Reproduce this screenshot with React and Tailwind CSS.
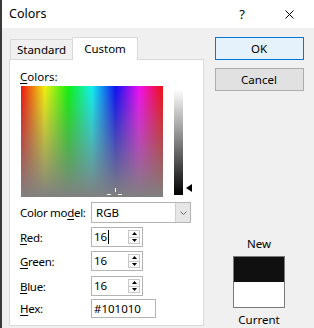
import React from 'react';

const Ul = ({ children }) => (
  <span className="underline decoration-1 underline-offset-[2px]">{children}</span>
);

const Tri = ({ down }) => (
  <svg width="5" height="3" viewBox="0 0 5 3">
    <path d={down ? 'M0 0H5L2.5 3Z' : 'M0 3H5L2.5 0Z'} fill="#000" />
  </svg>
);

const SpinInput = ({ value, caret }) => (
  <div className="flex h-[20px] w-[52px] items-center border border-[#b4b4b4] bg-white">
    <div className="flex flex-1 items-center pl-[2px] leading-[14px] text-black">
      {value}
      {caret && <span className="ml-px inline-block h-[14px] w-px bg-black" />}
    </div>
    <div className="mr-[2px] flex h-[14px] w-[12px] flex-col border border-[#c8c8c8] bg-[#fafafa]">
      <div className="flex flex-1 items-center justify-center border-b border-[#c8c8c8]">
        <Tri />
      </div>
      <div className="flex flex-1 items-center justify-center">
        <Tri down />
      </div>
    </div>
  </div>
);

const Row = ({ label, children, className = '' }) => (
  <div className={`flex items-center ${className}`}>
    <div className="w-[71px] whitespace-nowrap leading-[15px] tracking-[-0.3px] text-black">{label}</div>
    {children}
  </div>
);

export default function App() {
  return (
    <div className="flex h-[328px] w-[314px] flex-col overflow-hidden bg-[#f0f0f0] font-['Noto_Sans',sans-serif] text-[11.5px] text-black">
      {/* title bar */}
      <div className="flex h-[28px] shrink-0 items-center bg-white">
        <div className="h-full w-[2px] bg-[#3a3a3a]" />
        <span className="ml-[7px] text-[12.5px] leading-[16px]">Colors</span>
        <span className="ml-auto mr-[40px] text-[13px] leading-[16px]">?</span>
        <svg width="9" height="9" viewBox="0 0 9 9" className="mr-[20px]">
          <path d="M0.5 0.5L8.5 8.5M8.5 0.5L0.5 8.5" stroke="#000" strokeWidth="1" />
        </svg>
      </div>

      <div className="flex flex-1">
        <div className="w-[2px] bg-[#3a3a3a]" />

        {/* left: tabs + panel */}
        <div className="flex flex-col pl-[7px] pt-[9px]">
          <div className="flex h-[22px] items-end">
            <div className="ml-px flex h-[20px] w-[62px] items-center justify-center border-l border-t border-[#d9d9d9] bg-[#f0f0f0] leading-[15px]">
              Standard
            </div>
            <div className="relative z-10 -mb-px flex h-[23px] w-[66px] items-center justify-center border-l border-r border-t border-[#d9d9d9] bg-white pb-[2px] leading-[15px]">
              Custom
            </div>
          </div>
          <div className="flex h-[267px] w-[195px] flex-col border border-[#d9d9d9] bg-white pl-[10px] pt-[9px]">
            <div className="leading-[15px]">
              <Ul>C</Ul>olors:
            </div>
            <div className="mt-[2px] flex items-start">
              <div className="relative ml-px h-[111px] w-[142px] bg-[linear-gradient(to_right,#f01010,#f0f010_16.7%,#10f010_33.3%,#10f0f0_50%,#1010f0_66.7%,#f010f0_83.3%,#f01010)]">
                <div className="absolute inset-0 bg-[linear-gradient(to_bottom,rgba(128,128,128,0),#808080)]" />
                <div className="absolute left-[94px] top-[102px] h-[4px] w-px bg-white" />
                <div className="absolute left-[86px] top-[108px] h-px w-[4px] bg-white" />
                <div className="absolute left-[97px] top-[108px] h-px w-[4px] bg-white" />
              </div>
              <div className="ml-[11px] mt-[3px] h-[106px] w-[9px] bg-[linear-gradient(to_bottom,#ffffff,#808080_50%,#000000)]" />
              <svg width="6" height="8" viewBox="0 0 6 8" className="ml-[3px] mt-[98px]">
                <path d="M0 4L6 0V8Z" fill="#000" />
              </svg>
            </div>

            <Row label={<>Color mo<Ul>d</Ul>el:</>} className="mt-[5px]">
              <div className="flex h-[21px] w-[100px] items-center border border-[#b4b4b4] bg-white">
                <span className="flex-1 pl-[4px] leading-[15px]">RGB</span>
                <div className="flex h-full w-[15px] items-center justify-center border-l border-[#d0d0d0] bg-[#e6e6e6]">
                  <svg width="7" height="4" viewBox="0 0 7 4">
                    <path d="M0.5 0.5L3.5 3.5L6.5 0.5" stroke="#6d6d6d" fill="none" strokeWidth="1" />
                  </svg>
                </div>
              </div>
            </Row>
            <Row label={<><Ul>R</Ul>ed:</>} className="mt-[4px]">
              <SpinInput value="16" caret />
            </Row>
            <Row label={<><Ul>G</Ul>reen:</>} className="mt-[4px]">
              <SpinInput value="16" />
            </Row>
            <Row label={<><Ul>B</Ul>lue:</>} className="mt-[5px]">
              <SpinInput value="16" />
            </Row>
            <Row label={<><Ul>H</Ul>ex:</>} className="mt-[3px]">
              <div className="flex h-[19px] w-[65px] items-center border border-[#b4b4b4] bg-white pl-[2px] leading-[15px]">
                #101010
              </div>
            </Row>
          </div>
        </div>

        {/* right column */}
        <div className="flex flex-1 flex-col items-center pt-[9px]">
          <div className="flex h-[23px] w-[89px] items-center justify-center border border-[#0078d7] bg-[#e5f1fb] leading-[15px]">
            OK
          </div>
          <div className="mt-[8px] flex h-[23px] w-[89px] items-center justify-center border border-[#adadad] bg-[#e1e1e1] leading-[15px]">
            Cancel
          </div>
          <div className="mt-[145px] leading-[15px]">New</div>
          <div className="mt-[5px] flex h-[52px] w-[52px] flex-col border border-[#7a7a7a]">
            <div className="h-[25px] bg-[#101010]" />
            <div className="flex-1 bg-white" />
          </div>
          <div className="mt-[5px] leading-[14px]">Current</div>
        </div>
      </div>
    </div>
  );
}
